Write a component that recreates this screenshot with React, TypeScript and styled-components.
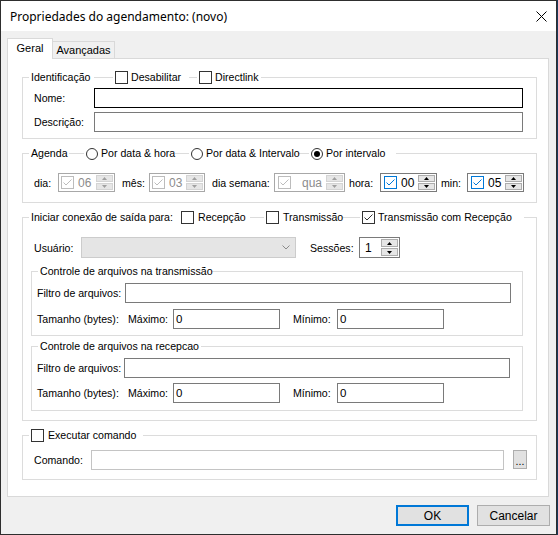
import React from "react";
import styled, { createGlobalStyle } from "styled-components";

const GlobalStyle = createGlobalStyle`
  html, body { margin: 0; padding: 0; background: #1b3a5c; }
  body {
    font-family: "Liberation Sans", Arial, sans-serif;
    font-size: 10.6px;
    color: #000;
  }
  * { box-sizing: border-box; }
`;

const Window = styled.div`
  width: 557px;
  height: 535px;
  border: 1px solid #2e2e2e;
  background: #f0f0f0;
  display: flex;
  flex-direction: column;
`;

const TitleBar = styled.div`
  height: 30px;
  flex-shrink: 0;
  background: #fff;
  display: flex;
  align-items: center;
  justify-content: space-between;
  padding: 0 9px 0 9px;
`;

const Title = styled.span`
  font-family: "Noto Sans", "Liberation Sans", sans-serif;
  font-size: 12px;
  color: #000;
`;

const CloseGlyph = styled.svg`
  width: 11px;
  height: 11px;
  display: block;
`;

const Body = styled.div`
  flex: 1;
  display: flex;
  flex-direction: column;
  padding: 7px 6px 8px 6px;
`;

const TabStrip = styled.div`
  height: 20px;
  display: flex;
  align-items: flex-end;
  position: relative;
  z-index: 1;
`;

const Tab = styled.div<{ $active?: boolean; $w: number }>`
  width: ${(p) => p.$w}px;
  height: ${(p) => (p.$active ? 21 : 17)}px;
  margin-bottom: ${(p) => (p.$active ? -1 : 0)}px;
  background: ${(p) => (p.$active ? "#fff" : "#f0f0f0")};
  border: 1px solid #d9d9d9;
  border-bottom: none;
  border-left: ${(p) => (p.$active ? "1px solid #d9d9d9" : "none")};
  display: flex;
  align-items: center;
  justify-content: center;
  padding-bottom: ${(p) => (p.$active ? 2 : 0)}px;
  font-size: 11px;
`;

const Panel = styled.div`
  width: 542px;
  height: 439px;
  background: #fff;
  border: 1px solid #d9d9d9;
  padding: 18px 11px 0 14px;
  display: flex;
  flex-direction: column;
  gap: 14px;
`;

const Group = styled.div<{ $pl: number; $pr?: number; $pb: number; $mt?: number }>`
  border: 1px solid #dcdcdc;
  display: flex;
  flex-direction: column;
  padding: 0 ${(p) => p.$pr ?? 13}px ${(p) => p.$pb}px ${(p) => p.$pl}px;
  margin-top: ${(p) => p.$mt ?? 0}px;
  flex-shrink: 0;
`;

const GroupHeader = styled.div<{ $inset: number; $mb: number }>`
  display: flex;
  align-items: center;
  height: 13px;
  margin-top: -7px;
  margin-left: -${(p) => p.$inset}px;
  margin-bottom: ${(p) => p.$mb}px;
`;

const HeadItem = styled.label<{ $ml: number; $w: number; $gap?: number }>`
  display: flex;
  align-items: center;
  gap: ${(p) => p.$gap ?? 3}px;
  height: 13px;
  width: ${(p) => p.$w}px;
  margin-left: ${(p) => p.$ml}px;
  padding-left: 2px;
  background: #fff;
  white-space: nowrap;
  flex-shrink: 0;
  line-height: 13px;
`;

const Row = styled.div<{ $h: number; $mt?: number; $ml?: number }>`
  display: flex;
  align-items: center;
  height: ${(p) => p.$h}px;
  margin-top: ${(p) => p.$mt ?? 0}px;
  margin-left: ${(p) => p.$ml ?? 0}px;
  flex-shrink: 0;
`;

const Label = styled.span<{ $w: number; $pl?: number; $ml?: number }>`
  width: ${(p) => p.$w}px;
  padding-left: ${(p) => p.$pl ?? 0}px;
  margin-left: ${(p) => p.$ml ?? 0}px;
  white-space: nowrap;
  flex-shrink: 0;
`;

const TextBox = styled.div<{ $w: number; $tone?: "focus" | "normal" | "light" }>`
  width: ${(p) => p.$w}px;
  height: 20px;
  flex-shrink: 0;
  background: #fff;
  border: 1px solid
    ${(p) => (p.$tone === "focus" ? "#000" : p.$tone === "light" ? "#c4c4c4" : "#7a7a7a")};
  display: flex;
  align-items: center;
  padding-left: 2px;
  font-size: 11.5px;
`;

const Combo = styled.div<{ $w: number }>`
  width: ${(p) => p.$w}px;
  height: 21px;
  flex-shrink: 0;
  background: #e5e5e5;
  border: 1px solid #cccccc;
  display: flex;
  align-items: center;
  justify-content: flex-end;
  padding-right: 5px;
`;

const Box = styled.span<{ $tone: "normal" | "off" | "blue" }>`
  width: 13px;
  height: 13px;
  flex-shrink: 0;
  background: #fff;
  border: 1px solid
    ${(p) => (p.$tone === "blue" ? "#0078d7" : p.$tone === "off" ? "#bcbcbc" : "#333")};
  display: inline-flex;
`;

const Radio = styled.span<{ $on?: boolean }>`
  width: 12px;
  height: 12px;
  flex-shrink: 0;
  border: 1px solid #333;
  border-radius: 50%;
  background: #fff;
  display: inline-flex;
  align-items: center;
  justify-content: center;
  &::after {
    content: "";
    width: 6px;
    height: 6px;
    border-radius: 50%;
    background: ${(p) => (p.$on ? "#000" : "transparent")};
  }
`;

const Spin = styled.div<{ $w: number; $h?: number; $off?: boolean; $pl?: number }>`
  width: ${(p) => p.$w}px;
  height: ${(p) => p.$h ?? 19}px;
  flex-shrink: 0;
  background: #fff;
  border: 1px solid ${(p) => (p.$off ? "#a8a8a8" : "#7a7a7a")};
  display: flex;
  align-items: center;
  padding: 0 1px 0 ${(p) => p.$pl ?? 2}px;
`;

const SpinValue = styled.span<{ $off?: boolean; $right?: boolean }>`
  flex: 1;
  padding-left: ${(p) => (p.$right ? 0 : 4)}px;
  padding-right: ${(p) => (p.$right ? 4 : 0)}px;
  text-align: ${(p) => (p.$right ? "right" : "left")};
  color: ${(p) => (p.$off ? "#8c8c8c" : "#000")};
  font-size: 12px;
`;

const SpinButtons = styled.div`
  width: 17px;
  align-self: stretch;
  margin: 1px 0;
  display: flex;
  flex-direction: column;
  gap: 1px;
`;

const SpinButton = styled.span<{ $off?: boolean }>`
  flex: 1;
  background: #e6e6e6;
  border: 1px solid ${(p) => (p.$off ? "#d4d4d4" : "#adadad")};
  display: flex;
  align-items: center;
  justify-content: center;
`;

const SmallButton = styled.div`
  width: 14px;
  height: 19px;
  margin-left: 9px;
  margin-top: -1px;
  background: #e1e1e1;
  border: 1px solid #adadad;
  display: flex;
  align-items: flex-end;
  justify-content: center;
  padding-bottom: 3px;
  line-height: 8px;
  flex-shrink: 0;
`;

const ButtonRow = styled.div`
  margin-top: 8px;
  display: flex;
  justify-content: flex-end;
  gap: 8px;
`;

const DialogButton = styled.div<{ $primary?: boolean }>`
  width: 73px;
  height: 21px;
  background: #e1e1e1;
  border: ${(p) => (p.$primary ? "2px solid #0078d7" : "1px solid #adadad")};
  display: flex;
  align-items: center;
  justify-content: center;
  font-size: 12px;
`;

type Tone = "normal" | "off" | "blue";

const CheckBox = ({ checked, tone = "normal" }: { checked?: boolean; tone?: Tone }) => {
  const color = tone === "blue" ? "#0078d7" : tone === "off" ? "#bcbcbc" : "#333";
  return (
    <Box $tone={tone}>
      {checked && (
        <svg width="11" height="11" viewBox="0 0 11 11">
          <polyline points="1.5,5.5 4,8 9.5,2.5" fill="none" stroke={color} strokeWidth="1" />
        </svg>
      )}
    </Box>
  );
};

const Arrow = ({ up, off }: { up?: boolean; off?: boolean }) => (
  <svg width="5" height="3" viewBox="0 0 5 3">
    <polygon points={up ? "0,3 2.5,0 5,3" : "0,0 5,0 2.5,3"} fill={off ? "#a0a0a0" : "#000"} />
  </svg>
);

const Spinner = ({
  w,
  h,
  value,
  off,
  check,
  right,
  pl,
}: {
  w: number;
  h?: number;
  value: string;
  off?: boolean;
  check?: Tone;
  right?: boolean;
  pl?: number;
}) => (
  <Spin $w={w} $h={h} $off={off} $pl={pl}>
    {check && <CheckBox checked tone={check} />}
    <SpinValue $off={off} $right={right}>
      {value}
    </SpinValue>
    <SpinButtons>
      <SpinButton $off={off}>
        <Arrow up off={off} />
      </SpinButton>
      <SpinButton $off={off}>
        <Arrow off={off} />
      </SpinButton>
    </SpinButtons>
  </Spin>
);

const Chevron = () => (
  <svg width="8" height="5" viewBox="0 0 8 5">
    <polyline points="0.5,0.5 4,4 7.5,0.5" fill="none" stroke="#8a8a8a" strokeWidth="1" />
  </svg>
);

const SizeRow = ({ mt }: { mt: number }) => (
  <Row $h={20} $mt={mt}>
    <Label $w={91}>Tamanho (bytes):</Label>
    <Label $w={45}>Máximo:</Label>
    <TextBox $w={107}>0</TextBox>
    <Label $w={44} $ml={13}>
      Mínimo:
    </Label>
    <TextBox $w={107}>0</TextBox>
  </Row>
);

export default function App() {
  return (
    <>
      <GlobalStyle />
      <Window>
        <TitleBar>
          <Title>Propriedades do agendamento: (novo)</Title>
          <CloseGlyph viewBox="0 0 11 11">
            <path d="M0.5,0.5 L10.5,10.5 M10.5,0.5 L0.5,10.5" stroke="#000" strokeWidth="1" />
          </CloseGlyph>
        </TitleBar>
        <Body>
          <TabStrip>
            <Tab $active $w={46}>
              Geral
            </Tab>
            <Tab $w={62}>Avançadas</Tab>
          </TabStrip>
          <Panel>
            <Group $pl={11} $pb={6}>
              <GroupHeader $inset={11} $mb={4}>
                <HeadItem $ml={6} $w={65}>
                  Identificação
                </HeadItem>
                <HeadItem $ml={19} $w={76}>
                  <CheckBox />
                  Desabilitar
                </HeadItem>
                <HeadItem $ml={8} $w={64}>
                  <CheckBox />
                  Directlink
                </HeadItem>
              </GroupHeader>
              <Row $h={20}>
                <Label $w={60}>Nome:</Label>
                <TextBox $w={429} $tone="focus" />
              </Row>
              <Row $h={20} $mt={4}>
                <Label $w={60}>Descrição:</Label>
                <TextBox $w={429} />
              </Row>
            </Group>

            <Group $pl={11} $pb={10}>
              <GroupHeader $inset={11} $mb={13}>
                <HeadItem $ml={6} $w={40}>
                  Agenda
                </HeadItem>
                <HeadItem $ml={15} $w={91}>
                  <Radio />
                  Por data &amp; hora
                </HeadItem>
                <HeadItem $ml={14} $w={109}>
                  <Radio />
                  Por data &amp; Intervalo
                </HeadItem>
                <HeadItem $ml={11} $w={87}>
                  <Radio $on />
                  Por intervalo
                </HeadItem>
              </GroupHeader>
              <Row $h={19}>
                <Label $w={24}>dia:</Label>
                <Spinner w={57} value="06" off check="off" />
                <Label $w={34} $pl={7}>
                  mês:
                </Label>
                <Spinner w={56} value="03" off check="off" />
                <Label $w={69} $pl={7}>
                  dia semana:
                </Label>
                <Spinner w={71} value="qua" off check="off" right pl={3} />
                <Label $w={35} $pl={4}>
                  hora:
                </Label>
                <Spinner w={57} value="00" check="blue" pl={3} />
                <Label $w={30} $pl={4}>
                  min:
                </Label>
                <Spinner w={57} value="05" check="blue" pl={3} />
              </Row>
            </Group>

            <Group $pl={8} $pb={9}>
              <GroupHeader $inset={8} $mb={13}>
                <HeadItem $ml={6} $w={150}>
                  Iniciar conexão de saída para:
                </HeadItem>
                <HeadItem $ml={0} $w={71} $gap={4}>
                  <CheckBox />
                  Recepção
                </HeadItem>
                <HeadItem $ml={14} $w={79} $gap={4}>
                  <CheckBox />
                  Transmissão
                </HeadItem>
                <HeadItem $ml={17} $w={164} $gap={3}>
                  <CheckBox checked />
                  Transmissão com Recepção
                </HeadItem>
              </GroupHeader>
              <Row $h={21} $ml={3}>
                <Label $w={47}>Usuário:</Label>
                <Combo $w={215}>
                  <Chevron />
                </Combo>
                <Label $w={49} $ml={14}>
                  Sessões:
                </Label>
                <Spinner w={41} h={21} value="1" pl={1} />
              </Row>

              <Group $pl={5} $pr={11} $pb={6} $mt={13}>
                <GroupHeader $inset={5} $mb={5}>
                  <HeadItem $ml={6} $w={174}>
                    Controle de arquivos na transmissão
                  </HeadItem>
                </GroupHeader>
                <Row $h={20}>
                  <Label $w={88}>Filtro de arquivos:</Label>
                  <TextBox $w={386} />
                </Row>
                <SizeRow mt={6} />
              </Group>

              <Group $pl={5} $pr={11} $pb={7} $mt={10}>
                <GroupHeader $inset={5} $mb={5}>
                  <HeadItem $ml={6} $w={163}>
                    Controle de arquivos na recepcao
                  </HeadItem>
                </GroupHeader>
                <Row $h={20}>
                  <Label $w={87}>Filtro de arquivos:</Label>
                  <TextBox $w={386} />
                </Row>
                <SizeRow mt={5} />
              </Group>
            </Group>

            <Group $pl={11} $pb={9}>
              <GroupHeader $inset={11} $mb={8}>
                <HeadItem $ml={6} $w={114} $gap={4}>
                  <CheckBox />
                  Executar comando
                </HeadItem>
              </GroupHeader>
              <Row $h={20}>
                <Label $w={57}>Comando:</Label>
                <TextBox $w={413} $tone="light" />
                <SmallButton>...</SmallButton>
              </Row>
            </Group>
          </Panel>
          <ButtonRow>
            <DialogButton $primary>OK</DialogButton>
            <DialogButton>Cancelar</DialogButton>
          </ButtonRow>
        </Body>
      </Window>
    </>
  );
}
